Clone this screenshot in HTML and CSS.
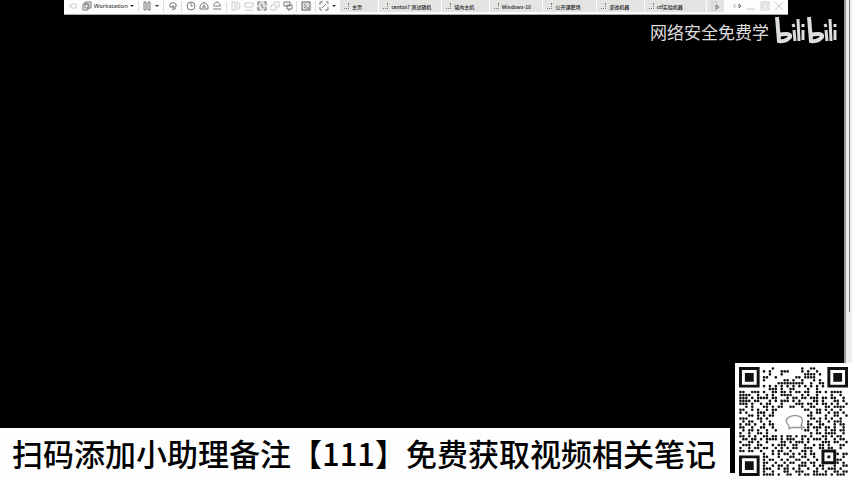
FILE: index.html
```html
<!DOCTYPE html>
<html lang="zh-CN">
<head>
<meta charset="utf-8">
<title>Workstation</title>
<link rel="stylesheet" href="styles.css">
</head>
<body>
<main class="screen">
  <header class="toolbar">
    <button class="tool faint" aria-label="固定"><svg viewBox="0 0 10 10"><path d="M1 5h2M3 3h5v4H3z"/></svg></button>
    <button class="menu"><svg viewBox="0 0 10 10"><path d="M1 3h5v6H1zM3 1h6v6H3zM4 3h3v3"/></svg>Workstation<i class="caret"></i></button>
    <span class="rule"></span>
    <button class="tool pause" aria-label="暂停"><svg viewBox="0 0 10 10"><path d="M2 1h2v8H2zM6 1h2v8H6z"/></svg><i class="caret"></i></button>
    <span class="rule"></span>
    <button class="tool" aria-label="发送按键"><svg viewBox="0 0 10 10"><path d="M2 6V3q3-3 6 0v3H2M5 4v5l3-2"/></svg></button>
    <span class="rule"></span>
    <span class="group">
      <button class="tool" aria-label="快照"><svg viewBox="0 0 10 10"><circle cx="5" cy="5" r="4"/><path d="M5 2v3h2"/></svg></button>
      <button class="tool" aria-label="恢复快照"><svg viewBox="0 0 10 10"><path d="M1 8V5q4-7 8 0v3zM3 6h4M5 3v3"/></svg></button>
      <button class="tool" aria-label="管理快照"><svg viewBox="0 0 10 10"><path d="M2 6q-1-4 3-5 4 1 3 5M1 8h8M3 5h4"/></svg></button>
    </span>
    <span class="rule"></span>
    <span class="group">
      <button class="tool faint" aria-label="侧栏"><svg viewBox="0 0 10 10"><path d="M1 1h3v8H1zM6 1q3 1 3 4T6 9z"/></svg></button>
      <button class="tool faint" aria-label="缩略图"><svg viewBox="0 0 10 10"><path d="M1 2h8v4H1zM1 9h8"/></svg></button>
      <button class="tool active" aria-label="全屏"><svg viewBox="0 0 10 10"><path d="M1 4V1h2M7 1h2v3M1 6v3h2M7 9h2V6M4 3l2 4"/></svg></button>
      <button class="tool faint" aria-label="统一模式"><svg viewBox="0 0 10 10"><path d="M1 4h5v5H1zM4 4V1h5v5H6"/></svg></button>
      <button class="tool" aria-label="多显示器"><svg viewBox="0 0 10 10"><path d="M1 1h6v4H1zM4 4h5v4H4zM6 8v2"/></svg></button>
    </span>
    <span class="rule"></span>
    <button class="tool active" aria-label="控制台"><svg viewBox="0 0 10 10"><path d="M1 1h8v8H1zM3 3l2 2-2 2M5 7h3"/></svg></button>
    <span class="rule"></span>
    <button class="tool pause" aria-label="拉伸"><svg viewBox="0 0 10 10"><path d="M1 4V1h3M7 1h2v2M1 6v3h2M6 9h3V6M3 7l4-4"/></svg><i class="caret"></i></button>
    <nav class="tabs">
      <a class="tab home" href="#">主页</a>
      <a class="tab wide" href="#">centos7 测试随机</a>
      <a class="tab small" href="#">域内主机</a>
      <a class="tab" href="#">Windows-10</a>
      <a class="tab" href="#">公开课靶场</a>
      <a class="tab small" href="#">渗透机器</a>
      <a class="tab wide" href="#">ctf实验机器</a>
      <button class="tool next" aria-label="下一个标签"><svg viewBox="0 0 10 10"><path class="pale" d="M1 1h5v8H1z"/><path d="M5 4l3 2-3 2z"/></svg></button>
    </nav>
    <span class="window">
      <button class="tool" aria-label="滚动标签"><svg viewBox="0 0 10 10"><path class="pale" d="M3 3L1 5l2 2z"/><path d="M7 3l2 2-2 2z"/></svg></button>
      <button class="tool faint" aria-label="最小化"><svg viewBox="0 0 10 10"><path d="M1 8h8"/></svg></button>
      <button class="tool faint" aria-label="还原"><svg viewBox="0 0 10 10"><path d="M1 1h8v8H1zM3 3h4v4H3z"/></svg></button>
      <button class="tool faint" aria-label="关闭"><svg viewBox="0 0 10 10"><path d="M1 1l8 8M9 1L1 9"/></svg></button>
    </span>
  </header>
  <div class="credit">
    <span>网络安全免费学</span>
    <svg class="logo" viewBox="0 0 62 28" role="img" aria-label="bilibili">
      <g id="bili"><path d="M2 1l2 24q7 1 11-4 1-3-4-3-4 0-7 1"/><path class="thin" d="M19 14l1 11M23 3l1 22M28 14v10M18 8l1 3M28 8v3"/></g>
      <use href="#bili" x="32"/>
    </svg>
  </div>
  <div class="scroll"><i></i></div>
  <footer class="bottom">
    <p class="banner">扫码添加小助理备注【111】免费获取视频相关笔记</p>
    <div class="code"><svg id="qr" viewBox="0 0 37 37" role="img" aria-label="二维码">
      <path class="ring" d="M.5.5h6v6h-6zM30.5.5h6v6h-6zM.5 30.5h6v6h-6zM28.5 28.5h4v4h-4z"/>
      <path d="M2 2h3v3H2zM32 2h3v3h-3zM2 32h3v3H2zM30 30h1v1h-1z"/>
      <path class="bubble" d="M17 20q-2-2 0-3 2-1 4 0 1 1 0 3M17 20v1l1-.5h2M20 20.5h2.500M21.300 19.500v2"/>
    </svg></div>
  </footer>
</main>
<script src="qr.js"></script>
</body>
</html>
```
FILE: styles.css
```css
* { box-sizing: border-box; }
body { margin: 0; background: #000; font-family: "Noto Sans CJK SC", sans-serif; }
.screen { position: relative; min-height: 100vh; display: flex; flex-direction: column; }
.toolbar { display: flex; align-items: center; justify-content: space-between; height: 15px; padding: 0 4px 2px; margin: 0 64px; background: #fdfdfd; border-bottom: 1px solid #aaa; font-size: 6px; }
button { display: flex; align-items: center; gap: 3px; padding: 0; border: 0; background: none; font: inherit; color: #222; }
svg { fill: none; stroke: #777; }
.tool svg, .menu svg { width: 10px; height: 10px; }
.menu { gap: 2px; font-family: "Noto Sans", sans-serif; }
.faint svg, .pale { stroke: #ccc; }
.active { background: #ddd; }
.caret { border: 2px solid transparent; border-top-color: #333; border-bottom: 0; }
.rule { width: 1px; height: 11px; background: #ddd; }
.group { display: flex; gap: 3px; }
.tabs { display: flex; width: 384px; height: 12px; background: #e4e4e2; font-size: 5px; font-weight: 500; }
.tab { flex: 54; display: flex; align-items: center; gap: 3px; padding-left: 4px; border-right: 1px solid #fff; color: #222; text-decoration: none; white-space: nowrap; }
.tab::before { content: ""; width: 4px; height: 5px; border-right: 1px dotted #777; border-bottom: 1px dotted #777; }
.home { flex: 38; }
.small { flex: 47; }
.wide { flex: 64; }
.next { flex: 14; padding-left: 4px; }
.window { display: flex; gap: 4px; padding-left: 4px; }
.credit { display: flex; align-items: center; justify-content: flex-end; gap: 6px; margin-right: 15px; color: #ddd; font-size: 17px; line-height: 34px; }
.logo { width: 62px; height: 28px; margin-bottom: 4px; stroke: #ddd; stroke-width: 4; }
.logo .thin { stroke-width: 3; }
.scroll { position: absolute; top: 0; right: 0; bottom: 0; width: 8px; background: #eee; border-left: 2px solid #999; }
.scroll i { display: block; width: 1px; height: 65%; margin-left: 3px; background: #777; }
.bottom { position: relative; display: flex; align-items: flex-end; margin-top: auto; background: linear-gradient(#0000 110px, #fafafa 110px); }
.banner { flex: 1; margin: 0 5px 0 0; padding-left: 12px; height: 52px; background: #fefefe; font-size: 31px; line-height: 50px; font-weight: 500; white-space: nowrap; }
.code { width: 117px; padding: 4px; background: #fff; }
.code svg { display: block; width: 109px; height: 109px; fill: #111; stroke: none; }
.code .ring { fill: none; stroke: #111; }
.code .bubble { fill: none; stroke: #999; stroke-width: 0.5; }
```
FILE: qr.js
```javascript
// One string per module row; the three finder corners are drawn in the markup.
const rows = [
  "...........#.........#..##...........",
  "........#.#...###....#.#..#..........",
  "..........#...#.......####.#.........",
  "........##..#......##.####...........",
  "........#......##.#..#...#.#.........",
  ".............#########..#..##........",
  "........#.#.#.#.#.#.#.#.#.#.#........",
  "..........###.#..##....#..#..........",
  "##..###.#..##.##.#.##.##..##.#.####..",
  "####..#..#.#..####...#.#..#....#..#..",
  "###.#.####.##...#.##.##.###.##.##..#.",
  "####.##...#.#.###.#.#....##.#...##.#.",
  "###.#..#.##...#....###.##.#.##.#.#..#",
  "..#.#...##.#.##..##..#..##...##.####.",
  "##..#.#..#.##.........##..##.#.#..#..",
  "#.#...###..#............#.##..#.##.#.",
  "...##.#.#.##...........##....#..##..#",
  "###...##.#..............##.#.#.#..#..",
  ".#.##..#..#............#..##..#.###..",
  "#.##.#..#.##...........##..##...#.##.",
  "##..#..##..#...........#.###.##.#..#.",
  ".#.##.#..#..#.........##..#..#.##.##.",
  "#..#..##.#..............#.##.####..#.",
  "##.#.#..##.##.#.##.#.##.#...##.#.##..",
  ".##.##.#.####.#.###..#.#.###.#..#.##.",
  "#..##.#..#....##.#.###.#....###.##..#",
  ".###..##...#.###..##..#..#.##.#...##.",
  "#..#.##.##..#.#.#.##..###..##.##..#..",
  "##.##..#...#.##..#...##.#............",
  "........#..#.#.##.#.#.#.##.......#.##",
  "........##...#...##..##..#.........#.",
  "........#.##..#.#..##..#..#......##..",
  "........##..#..#.##..##.##.......#.#.",
  "........#..#.##.#...###..#.##...#..##",
  "........###..#.##.#.#..#..#.#.###.#..",
  "........#..#...##..###...##..#..##.##",
  "........####.#..##..#.##.#####.#.###."
];
const qr = document.getElementById("qr");
const dots = document.createElementNS("http://www.w3.org/2000/svg", "path");
dots.setAttribute("d", rows.map((row, y) => [...row].map((cell, x) =>
  cell === "#" ? `M${x + 0.05} ${y + 0.5}a.45.45 0 1 0 .9 0a.45.45 0 1 0-.9 0z` : "").join("")).join(""));
qr.append(dots);
```
